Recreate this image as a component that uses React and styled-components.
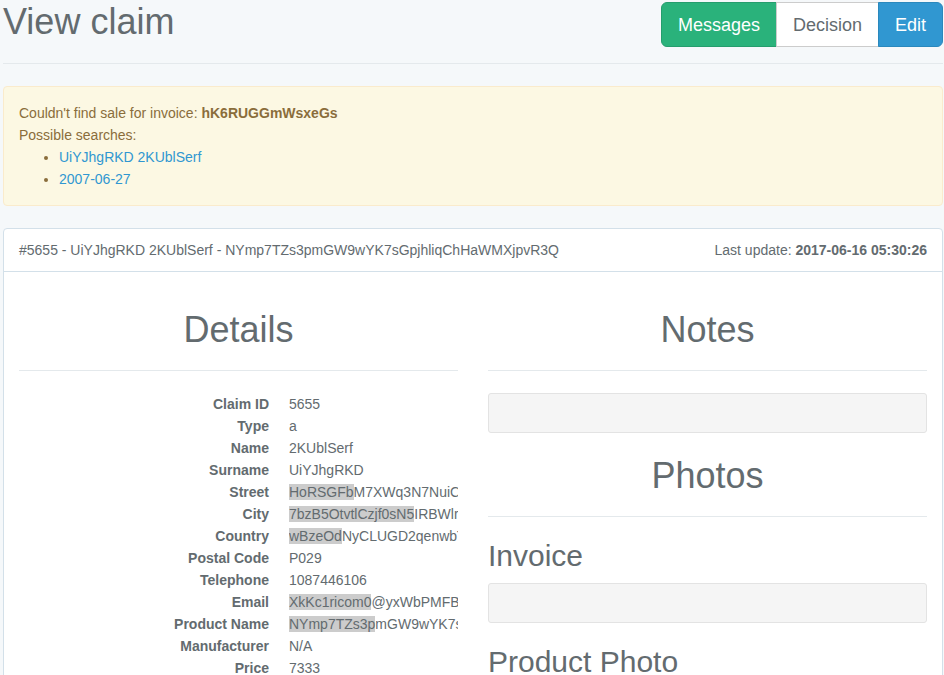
import styled, { createGlobalStyle } from "styled-components";

const Global = createGlobalStyle`
  html, body {
    margin: 0;
    padding: 0;
    background: #f5f8fa;
  }
  body {
    font-family: "Liberation Sans", Arial, Helvetica, sans-serif;
    font-size: 14px;
    line-height: 22px;
    color: #636b6f;
  }
  * { box-sizing: border-box; }
`

const Page = styled.div`
  width: 943px;
  padding: 0 0 0 3px;
`

const Header = styled.div`
  display: flex;
  justify-content: space-between;
  align-items: flex-start;
  height: 47px;
`

const Title = styled.h1`
  margin: 2px 0 0;
  font-size: 36px;
  line-height: 40px;
  font-weight: 400;
  color: #636b6f;
`

const BtnGroup = styled.div`
  display: flex;
  margin-top: 2px;
`

const colors = {
  success: { bg: "#2ab27b", border: "#259d6d", fg: "#fff" },
  default: { bg: "#fff", border: "#ccc", fg: "#636b6f" },
  primary: { bg: "#3097d1", border: "#2a88bd", fg: "#fff" },
}

const Btn = styled.button`
  font-family: inherit;
  font-size: 18px;
  line-height: 24px;
  padding: 10px 16px;
  height: 45px;
  border: 1px solid ${p => colors[p.$kind].border};
  background: ${p => colors[p.$kind].bg};
  color: ${p => colors[p.$kind].fg};
  border-radius: 0;
  margin-left: -1px;
  cursor: pointer;
  &:first-child { border-radius: 6px 0 0 6px; margin-left: 0; }
  &:last-child { border-radius: 0 6px 6px 0; }
`

const Rule = styled.hr`
  border: 0;
  border-top: 1px solid #e4e9ec;
  margin: ${p => p.$top ?? 22}px 0 22px;
`

const Alert = styled.div`
  background: #fcf8e3;
  border: 1px solid #faebcc;
  color: #8a6d3b;
  border-radius: 4px;
  padding: 15px;
  margin-bottom: 22px;

  ul {
    margin: 0;
    padding-left: 40px;
  }
  a {
    color: #3097d1;
    text-decoration: none;
  }
`

const Panel = styled.div`
  background: #fff;
  border: 1px solid #d3e0e9;
  border-radius: 4px;
`

const PanelHeading = styled.div`
  display: flex;
  justify-content: space-between;
  padding: 10px 15px;
  border-bottom: 1px solid #d3e0e9;
  color: #636b6f;
`

const PanelBody = styled.div`
  padding: 15px;
  display: grid;
  grid-template-columns: 1fr 1fr;
  column-gap: 30px;
`

const Column = styled.div`
  min-width: 0;
`

const Heading = styled.h1`
  margin: 23px 0 0;
  font-size: 36px;
  line-height: 1.1;
  font-weight: 400;
  text-align: center;
  color: #636b6f;
`

const SubHeading = styled.h2`
  margin: 22px 0 11px;
  font-size: 30px;
  line-height: 1.1;
  font-weight: 400;
  color: #636b6f;
`

const DetailList = styled.dl`
  display: grid;
  grid-template-columns: 250px 1fr;
  column-gap: 20px;
  margin: 0;
`

const Term = styled.dt`
  font-weight: 700;
  text-align: right;
  white-space: nowrap;
`

const Value = styled.dd`
  margin: 0;
  white-space: nowrap;
  overflow: hidden;
`

const Hit = styled.mark`
  background: #cccccc;
  color: inherit;
  padding: 0;
`

const Well = styled.div`
  min-height: 40px;
  padding: 9px;
  background: #f5f5f5;
  border: 1px solid #e3e3e3;
  border-radius: 3px;
  margin-bottom: 22px;
`

const details = [
  ["Claim ID", "5655"],
  ["Type", "a"],
  ["Name", "2KUblSerf"],
  ["Surname", "UiYJhgRKD"],
  ["Street", "M7XWq3N7NuiCkq8VbTrL2", "HoRSGFb"],
  ["City", "IRBWlrQx2mPa", "7bzB5OtvtlCzjf0sN5"],
  ["Country", "NyCLUGD2qenwbT5sLk", "wBzeOd"],
  ["Postal Code", "P029"],
  ["Telephone", "1087446106"],
  ["Email", "@yxWbPMFBq2.com", "XkKc1ricom0"],
  ["Product Name", "mGW9wYK7sGpjhliqChHaWMXjpvR3Q", "NYmp7TZs3p"],
  ["Manufacturer", "N/A"],
  ["Price", "7333"],
]

export default function App() {
  return (
    <Page>
      <Global />
      <Header>
        <Title>View claim</Title>
        <BtnGroup>
          <Btn $kind="success">Messages</Btn>
          <Btn $kind="default">Decision</Btn>
          <Btn $kind="primary">Edit</Btn>
        </BtnGroup>
      </Header>
      <Rule $top={16} />

      <Alert>
        <div>Couldn't find sale for invoice: <b>hK6RUGGmWsxeGs</b></div>
        <div>Possible searches:</div>
        <ul>
          <li><a href="#">UiYJhgRKD 2KUblSerf</a></li>
          <li><a href="#">2007-06-27</a></li>
        </ul>
      </Alert>

      <Panel>
        <PanelHeading>
          <span>#5655 - UiYJhgRKD 2KUblSerf - NYmp7TZs3pmGW9wYK7sGpjhliqChHaWMXjpvR3Q</span>
          <span>Last update: <b>2017-06-16 05:30:26</b></span>
        </PanelHeading>
        <PanelBody>
          <Column>
            <Heading>Details</Heading>
            <Rule $top={20} />
            <DetailList>
              {details.map(([label, value, hit]) => (
                <>
                  <Term key={label + "t"}>{label}</Term>
                  <Value key={label + "v"}>{hit && <Hit>{hit}</Hit>}{value}</Value>
                </>
              ))}
            </DetailList>
          </Column>
          <Column>
            <Heading>Notes</Heading>
            <Rule $top={20} />
            <Well />
            <Heading>Photos</Heading>
            <Rule $top={21} />
            <SubHeading>Invoice</SubHeading>
            <Well />
            <SubHeading>Product Photo</SubHeading>
            <Well />
          </Column>
        </PanelBody>
      </Panel>
    </Page>
  );
}
